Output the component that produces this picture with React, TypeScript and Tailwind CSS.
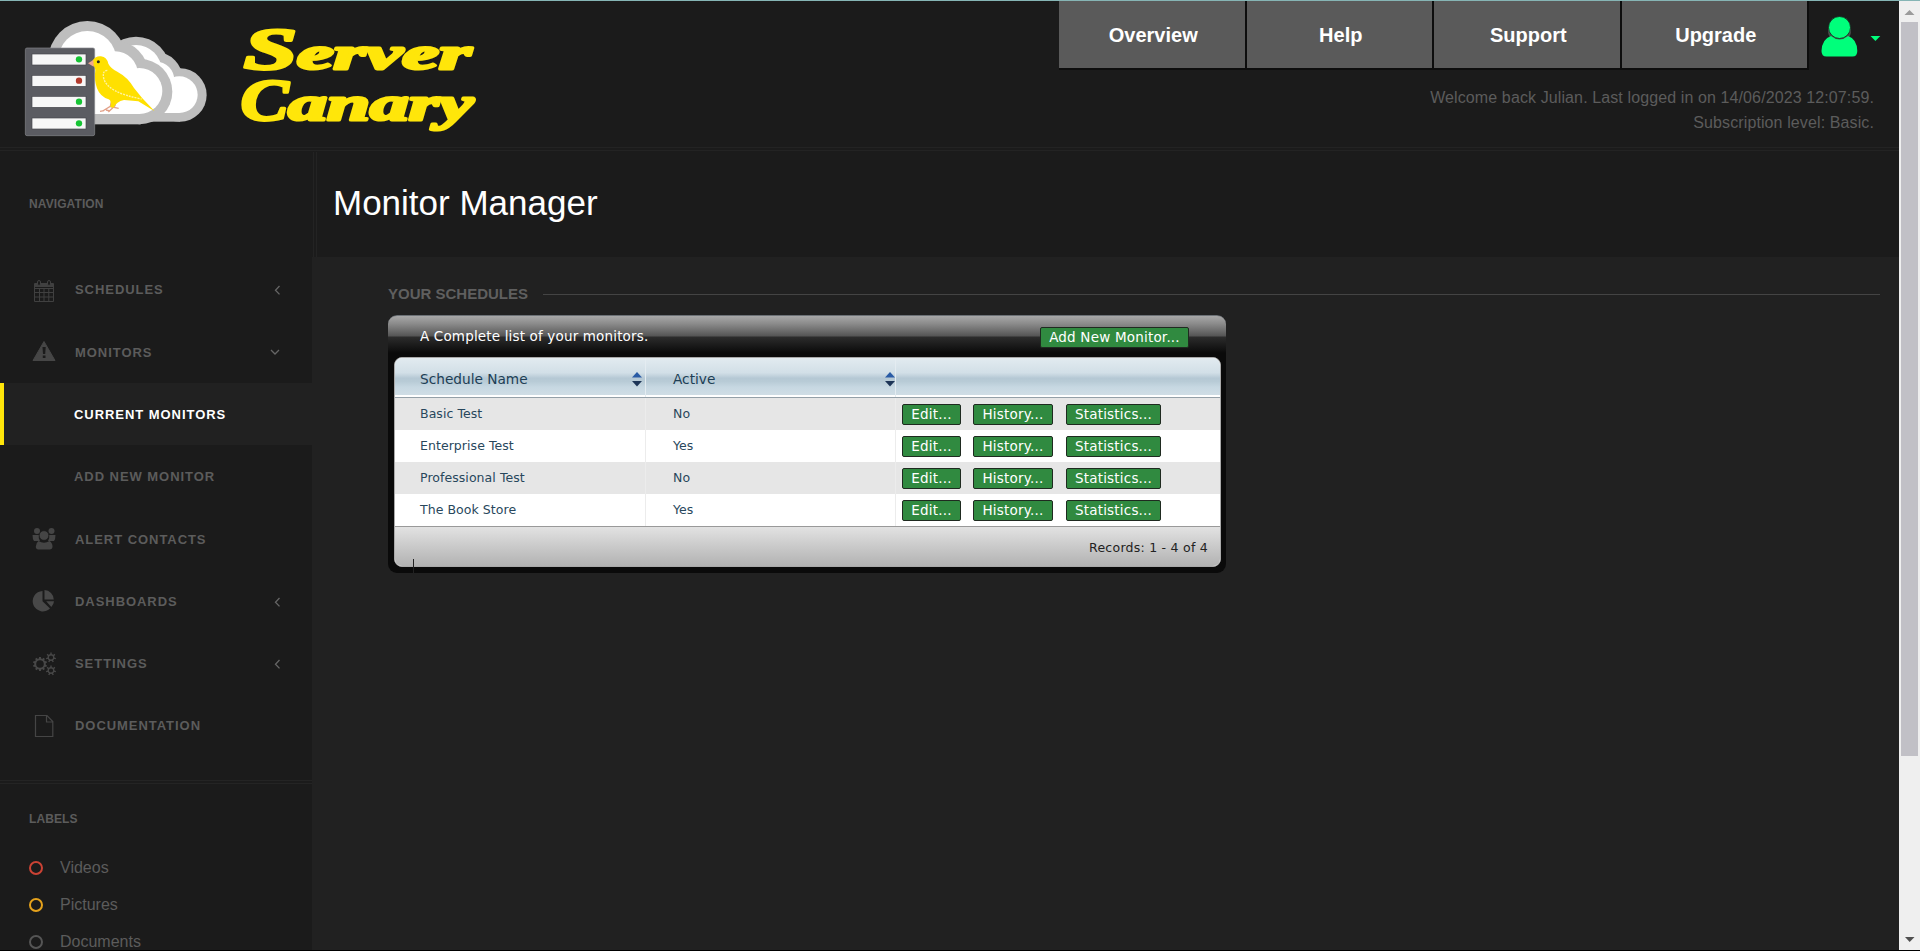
import React from 'react';

const yellow = '#ffe60a';

function Logo() {
  return (
    <svg width="500" height="147" viewBox="0 3 1500 441" className="block shrink-0">
      <g fill="#bebebe">
        <circle cx="408" cy="212" r="102" />
        <circle cx="468" cy="237" r="80" />
        <circle cx="540" cy="285" r="80" />
        <rect x="400" y="285" width="140" height="80" />
      </g>
      <g fill="#fff">
        <circle cx="408" cy="212" r="77" />
        <circle cx="468" cy="240" r="55" />
        <circle cx="538" cy="284" r="55" />
        <rect x="440" y="280" width="98" height="59" />
      </g>
      <g fill="#bebebe">
        <circle cx="262" cy="180" r="117" />
        <circle cx="346" cy="222" r="99" />
        <circle cx="419" cy="275" r="98" />
        <rect x="240" y="270" width="182" height="103" />
      </g>
      <g fill="#fff">
        <circle cx="262" cy="180" r="87" />
        <circle cx="345" cy="223" r="69" />
        <circle cx="418" cy="273" r="69" />
        <rect x="240" y="240" width="180" height="102" />
      </g>
      <rect x="76" y="144" width="208" height="263" rx="5" fill="#5b5c62" stroke="#85868b" strokeWidth="2" />
      {[162, 226, 289, 354].map((y, i) => (
        <g key={y}>
          <rect x="96" y={y} width="162" height="33" fill="#f7f7f7" stroke="#45464b" strokeWidth="2" />
          <circle cx="237" cy={y + 16} r="9.5" fill={i === 1 ? '#b23a2c' : '#16c434'} />
        </g>
      ))}
      <path d="M337 292 L331 319 L308 333 M347 294 L345 317 L325 336 M331 320 L356 325 M318 330 L330 333 M300 334 L312 332" fill="none" stroke="#e2a088" strokeWidth="4" />
      <path d="M278 181 Q288 167 303 169 Q321 172 325 191 Q332 205 352 215 Q384 232 402 264 L427 295 L464 334 L415 304 L372 300 Q349 305 341 323 L331 321 Q336 303 326 298 Q301 291 291 265 Q282 240 286 210 Q286 200 278 195 Z" fill="#ffe000" />
      <path d="M322 211 Q305 213 312 238 Q325 278 425 297" fill="none" stroke="#fff3a0" strokeWidth="4" strokeDasharray="6 3" />
      <path d="M280 180 L264 190 L281 200 Z" fill="#f0a58e" />
      <circle cx="295" cy="185" r="4.5" fill="#222" />
      <g fill={yellow} stroke={yellow} strokeWidth="9" strokeLinejoin="round" className="font-['Liberation_Serif',serif] font-bold italic">
        <text x="731" y="208" fontSize="180">
          <tspan textLength="160" lengthAdjust="spacingAndGlyphs">S</tspan>
          <tspan fontSize="140" textLength="522" lengthAdjust="spacingAndGlyphs">erver</tspan>
        </text>
        <text x="722" y="360" fontSize="180">
          <tspan textLength="143" lengthAdjust="spacingAndGlyphs">C</tspan>
          <tspan fontSize="144" textLength="555" lengthAdjust="spacingAndGlyphs">anary</tspan>
        </text>
      </g>
    </svg>
  );
}

function UserMenu() {
  return (
    <svg width="90" height="70" viewBox="0 0 90 70" className="block shrink-0">
      <circle cx="30.5" cy="30" r="11.5" fill="#4a4f4c" />
      <path d="M22 35 Q30.500 42 39 35 Q48 38 48.300 50 Q48.300 55.500 43.500 55.500 H17.500 Q12.500 55.500 12.500 50 Q13 38 22 35Z" fill="#00ff7b" />
      <circle cx="30.500" cy="26.500" r="11" fill="#00ff7b" stroke="#1b1b1b" strokeWidth="0.800" />
      <path d="M61.500 35 H71.300 L66.400 40Z" fill="#00ff7b" />
    </svg>
  );
}

type IconName = 'calendar' | 'warning' | 'people' | 'pie' | 'gears' | 'file';

function Gear({ x, y, r, n, w }: { x: number; y: number; r: number; n: number; w: number }) {
  return (
    <g transform={`translate(${x} ${y})`} fill="none" stroke="#484848">
      <circle r={r} strokeWidth={w} />
      {Array.from({ length: n }, (_, i) => (
        <path key={i} d={`M0 ${-r} V${-r - 2.2}`} strokeWidth={w} transform={`rotate(${(i * 360) / n})`} />
      ))}
    </g>
  );
}

function NavIcon({ name }: { name: IconName }) {
  return (
    <svg width="24" height="24" viewBox="0 0 24 24" className="block shrink-0">
      {name === 'calendar' && (
        <g fill="none" stroke="#404040">
          <path d="M2.500 5.500 H21.500 V23.500 H2.500Z M2.500 10.500 H21.500 M2.500 14.500 H21.500 M2.500 19 H21.500 M7.500 10 V23 M12 10 V23 M16.800 10 V23" strokeWidth="1" />
          <path d="M3 7.500 H21" strokeWidth="3" />
          <rect x="5.500" y="2.500" width="3" height="5" rx="1.500" fill="#1b1b1b" />
          <rect x="15.500" y="2.500" width="3" height="5" rx="1.500" fill="#1b1b1b" />
        </g>
      )}
      {name === 'warning' && (
        <g>
          <path d="M12 1.500 L23 20.500 H1Z" fill="#464646" stroke="#464646" strokeLinejoin="round" />
          <path d="M10.500 7 H13.700 L13.200 14 H11Z M10.800 15.500 H13.500 V18 H10.800Z" fill="#1b1b1b" />
        </g>
      )}
      {name === 'people' && (
        <g fill="#454545">
          <circle cx="5" cy="4" r="3" />
          <circle cx="19.500" cy="4" r="3" />
          <path d="M0.500 8 H7 Q6 11 8 14 H2 Q0.500 12 0.500 8Z M23.500 8 H17 Q18 11 16 14 H22 Q23.500 12 23.500 8Z" />
          <circle cx="12" cy="8.500" r="4.800" stroke="#1b1b1b" strokeWidth="0.700" />
          <path d="M6.500 14 Q12 17.500 17.500 14 Q20.500 16 20.500 19.500 Q20.500 22.500 17.500 22.500 H6.500 Q3.800 22.500 3.800 19.500 Q3.800 16 6.500 14Z" />
        </g>
      )}
      {name === 'pie' && (
        <g fill="#484848">
          <path d="M10.500 1 V11.200 L18 18.500 A10.200 10.200 0 1 1 10.500 1Z" />
          <path d="M12.500 0 A9.800 9.800 0 0 1 21.800 9.500 H12.500Z" />
          <path d="M14.200 11.300 H22 A9 9 0 0 1 19.300 17Z" />
        </g>
      )}
      {name === 'gears' && (
        <g>
          <Gear x={8} y={12} r={4.800} n={10} w={2} />
          <Gear x={19} y={5.500} r={2.800} n={7} w={1.400} />
          <Gear x={19} y={18.500} r={2.800} n={7} w={1.400} />
        </g>
      )}
      {name === 'file' && (
        <path d="M3.500 1.500 H15 L20.800 7.500 V22.500 H3.500Z M14.500 1.500 V8 H20.800" fill="none" stroke="#454545" strokeWidth="1.200" />
      )}
    </svg>
  );
}

function Chevron({ down }: { down?: boolean }) {
  return (
    <svg width="12" height="12" viewBox="0 0 12 12" className="ml-auto mr-[30px] block">
      <path d={down ? 'M1 4 L5 8 L9 4' : 'M9.500 2 L5.500 6.200 L9.500 10.400'} fill="none" stroke="#666" strokeWidth="1.300" />
    </svg>
  );
}

const nav: { label: string; icon?: IconName; arrow?: 'left' | 'down'; active?: boolean }[] = [
  { label: 'SCHEDULES', icon: 'calendar', arrow: 'left' },
  { label: 'MONITORS', icon: 'warning', arrow: 'down' },
  { label: 'CURRENT MONITORS', active: true },
  { label: 'ADD NEW MONITOR' },
  { label: 'ALERT CONTACTS', icon: 'people' },
  { label: 'DASHBOARDS', icon: 'pie', arrow: 'left' },
  { label: 'SETTINGS', icon: 'gears', arrow: 'left' },
  { label: 'DOCUMENTATION', icon: 'file' },
];

const labels = [
  { name: 'Videos', ring: 'border-[#cb4234]' },
  { name: 'Pictures', ring: 'border-[#e5a21c]' },
  { name: 'Documents', ring: 'border-[#555555]' },
];

function Sidebar() {
  return (
    <aside className="flex w-[312px] shrink-0 flex-col bg-[#1b1b1b] text-[#5c5c5c]">
      <div className="flex h-[106px] shrink-0 items-start pl-[29px] pt-[44px] text-xs font-bold leading-[17px] tracking-[0.100px]">NAVIGATION</div>
      <nav className="flex h-[522px] shrink-0 flex-col text-[13px] font-bold tracking-[0.950px]">
        {nav.map((item) => (
          <div
            key={item.label}
            className={
              item.active
                ? 'flex h-[62.300px] shrink-0 items-center border-l-4 border-[#ffe60a] bg-[#212121] pl-[70px] pt-[2px] text-white'
                : 'flex h-[62.300px] shrink-0 items-center pl-8 pt-[2px]'
            }
          >
            {item.icon && <NavIcon name={item.icon} />}
            <span className={item.icon ? 'pl-[19px]' : item.active ? '' : 'pl-[42px]'}>{item.label}</span>
            {item.arrow && <Chevron down={item.arrow === 'down'} />}
          </div>
        ))}
      </nav>
      <div className="h-1 shrink-0 border-y border-[#242424]" />
      <div className="flex h-[65px] shrink-0 items-center pl-[29px] pt-[4px] text-xs font-bold tracking-[0.100px]">LABELS</div>
      {labels.map((l) => (
        <div key={l.name} className="flex h-[37px] shrink-0 items-center gap-[17px] pl-[29px] text-base">
          <span className={`size-[14px] rounded-full border-2 ${l.ring}`} />
          {l.name}
        </div>
      ))}
    </aside>
  );
}

function ActionButton({ label, className }: { label: string; className: string }) {
  return (
    <button className={`flex h-[21px] items-center justify-center rounded-[2px] border border-[#1f2a20] bg-[#308a40] text-[13.500px] tracking-[0.200px] text-white ${className}`}>
      {label}
    </button>
  );
}

function Sorter({ className }: { className: string }) {
  return (
    <svg width="10" height="16" viewBox="0 0 10 16" className={`ml-auto mt-[3px] block ${className}`}>
      <path d="M0 6.500 L5 1 L10 6.500Z" fill="#2a5ba5" />
      <path d="M0 10 H10 L5 15.500Z" fill="#1d3557" />
    </svg>
  );
}

const rows = [
  ['Basic Test', 'No'],
  ['Enterprise Test', 'Yes'],
  ['Professional Test', 'No'],
  ['The Book Store', 'Yes'],
];

function MonitorTable() {
  return (
    <section className="relative ml-[76px] flex h-[258px] w-[838px] flex-col rounded-[9px] bg-[#0a0a0a] font-['DejaVu_Sans',sans-serif]">
      <div className="flex h-[42px] items-start rounded-t-[9px] border-t border-[#6c7176] bg-[linear-gradient(to_bottom,#a8a8a8_0px,#8a8a8a_8px,#555_20px,#2c2c2c_21px,#1b1b1b_29px,#0a0a0a_37px)] pl-8 text-[13.500px] text-white">
        <span className="pt-[10px] leading-5 tracking-[0.160px]">A Complete list of your monitors.</span>
        <ActionButton label="Add New Monitor..." className="ml-auto mr-[37px] mt-[11px] w-[149px]" />
      </div>
      <div className="ml-[6px] mr-[5px] flex h-[210px] flex-col overflow-hidden rounded-lg border border-[#a9a9a9] bg-white text-[#28475c]">
        <div className="flex h-[40px] shrink-0 border-b border-[#94a0a8] bg-[linear-gradient(to_bottom,#e2ebf0_0%,#d2dfe7_38%,#b5c8d4_52%,#b8cbd6_60%,#c7d8e2_75%,#cfdde5_94%,#fff_96%)] text-[13.700px] text-[#203e55]">
          <div className="flex w-[251px] items-center border-r border-[#e4ecf1] pl-[25px]"><span className="pt-[3px]">Schedule Name</span><Sorter className="mr-[3px]" /></div>
          <div className="flex w-[250px] items-center border-r border-[#e4ecf1] pl-[27px]"><span className="pt-[3px]">Active</span><Sorter className="" /></div>
        </div>
        {rows.map(([name, active]) => (
          <div key={name} className="flex h-8 shrink-0 text-[12.500px] tracking-[0.060px] odd:bg-white even:bg-[#e6e6e6]">
            <div className="flex w-[251px] items-center border-r border-[#ececec] pl-[25px]">{name}</div>
            <div className="flex w-[250px] items-center border-r border-[#ececec] pl-[27px]">{active}</div>
            <div className="flex items-center pl-[6px] pt-[1px]">
              <ActionButton label="Edit..." className="w-[59px]" />
              <ActionButton label="History..." className="ml-3 w-[80px]" />
              <ActionButton label="Statistics..." className="ml-[13px] w-[95px]" />
            </div>
          </div>
        ))}
        <div className="flex grow items-center justify-end border-t border-[#999] bg-linear-to-b from-[#e2e2e2] to-[#b2b2b2] pr-[12px] pt-[3px] text-[12.500px] tracking-[0.250px] text-[#222]">Records: 1 - 4 of 4</div>
      </div>
      <span className="absolute bottom-0 left-[25px] h-[14px] w-px bg-[#222]" />
    </section>
  );
}

function Scrollbar() {
  return (
    <div className="flex w-[21px] shrink-0 flex-col bg-[#efefef]">
      <svg width="21" height="21" viewBox="0 0 21 21" className="block"><path d="M5.500 14 L10.500 9 L15.500 14Z" fill="#9b9b9b" /></svg>
      <div className="ml-[2px] h-[734px] w-[17px] bg-[#c1c0c6]" />
      <svg width="21" height="14" viewBox="0 0 21 14" className="mt-auto mb-[1px] block"><path d="M6 2 H15.500 L10.700 7Z" fill="#505050" /></svg>
    </div>
  );
}

export default function App() {
  return (
    <div className="flex h-[951px] w-[1920px] flex-col overflow-hidden border-b border-t border-b-black border-t-[#86b5b5] bg-[#1b1b1b] font-['Liberation_Sans',sans-serif]">
      <div className="flex h-[949px]">
        <div className="flex w-[1899px] shrink-0 flex-col">
          <header className="flex h-[151px] shrink-0 flex-col">
            <div className="flex h-[146px] shrink-0 justify-between">
              <Logo />
              <div className="flex flex-col text-[#5c5c5c]">
                <div className="flex h-[70px]">
                  {['Overview', 'Help', 'Support', 'Upgrade'].map((t) => (
                    <button key={t} className="mb-[1px] flex w-[187.500px] justify-center border-b-2 border-r-2 border-[#0d0d0d] bg-[#5a5a5a] pl-[3px] pt-[19px] text-xl font-bold leading-[30px] text-white">{t}</button>
                  ))}
                  <UserMenu />
                </div>
                <p className="pr-[25px] pt-[14px] text-right text-base leading-[25px] tracking-[0.110px]">
                  Welcome back Julian. Last logged in on 14/06/2023 12:07:59.<br />Subscription level: Basic.
                </p>
              </div>
            </div>
            <div className="h-1 border-y border-[#232323]" />
          </header>
          <div className="flex h-[798px]">
            <Sidebar />
            <main className="flex grow flex-col bg-[#212121]">
              <div className="flex h-[105px] shrink-0 bg-[#1b1b1b]">
                <div className="ml-[1px] w-1 border-x border-[#232323]" />
                <h1 className="pl-[16px] pt-[31px] text-[35px] leading-[40px] text-white">Monitor Manager</h1>
              </div>
              <div className="flex h-[58px] shrink-0 items-center pl-[76px] pr-[19px] pt-[16px]">
                <h2 className="text-[15px] font-bold text-[#5f5f5f]">YOUR SCHEDULES</h2>
                <div className="ml-[15px] h-px grow bg-[#444]" />
              </div>
              <MonitorTable />
            </main>
          </div>
        </div>
        <Scrollbar />
      </div>
    </div>
  );
}
